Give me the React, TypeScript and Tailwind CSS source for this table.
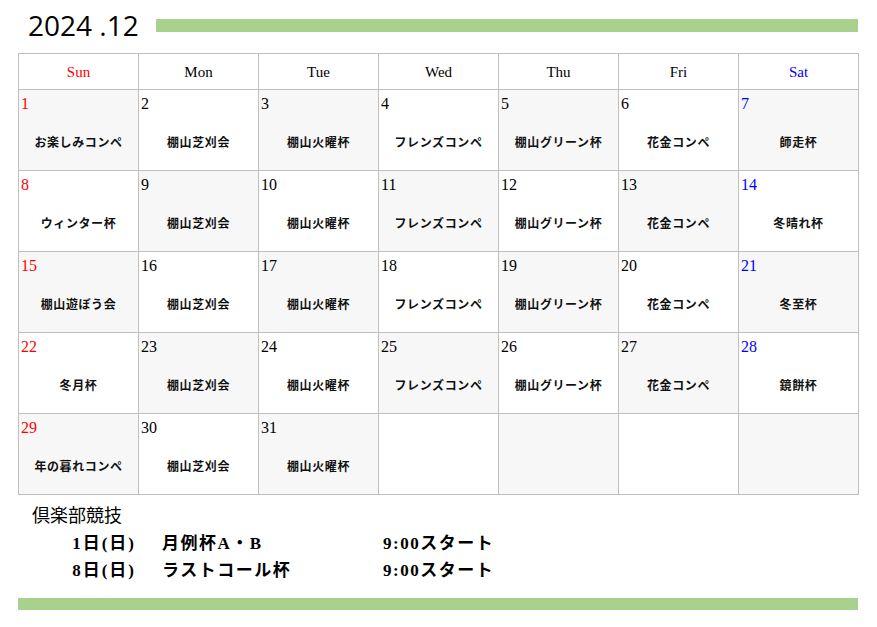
const serif = "font-['Liberation_Serif','Noto_Sans_CJK_JP',serif]";

type Day = { d: number; ev: string } | null;

const days: Day[] = [
  { d: 1, ev: "お楽しみコンペ" },
  { d: 2, ev: "棚山芝刈会" },
  { d: 3, ev: "棚山火曜杯" },
  { d: 4, ev: "フレンズコンペ" },
  { d: 5, ev: "棚山グリーン杯" },
  { d: 6, ev: "花金コンペ" },
  { d: 7, ev: "師走杯" },
  { d: 8, ev: "ウィンター杯" },
  { d: 9, ev: "棚山芝刈会" },
  { d: 10, ev: "棚山火曜杯" },
  { d: 11, ev: "フレンズコンペ" },
  { d: 12, ev: "棚山グリーン杯" },
  { d: 13, ev: "花金コンペ" },
  { d: 14, ev: "冬晴れ杯" },
  { d: 15, ev: "棚山遊ぼう会" },
  { d: 16, ev: "棚山芝刈会" },
  { d: 17, ev: "棚山火曜杯" },
  { d: 18, ev: "フレンズコンペ" },
  { d: 19, ev: "棚山グリーン杯" },
  { d: 20, ev: "花金コンペ" },
  { d: 21, ev: "冬至杯" },
  { d: 22, ev: "冬月杯" },
  { d: 23, ev: "棚山芝刈会" },
  { d: 24, ev: "棚山火曜杯" },
  { d: 25, ev: "フレンズコンペ" },
  { d: 26, ev: "棚山グリーン杯" },
  { d: 27, ev: "花金コンペ" },
  { d: 28, ev: "鏡餅杯" },
  { d: 29, ev: "年の暮れコンペ" },
  { d: 30, ev: "棚山芝刈会" },
  { d: 31, ev: "棚山火曜杯" },
  null,
  null,
  null,
  null,
];

const heads = ["Sun", "Mon", "Tue", "Wed", "Thu", "Fri", "Sat"];

function dayColor(col: number) {
  if (col === 0) return "text-[#ff0000]";
  if (col === 6) return "text-[#0000ff]";
  return "text-black";
}

export default function App() {
  const rows = [0, 1, 2, 3, 4].map((r) => days.slice(r * 7, r * 7 + 7));

  return (
    <div className="h-[627px] w-[877px] bg-white">
      <div className="flex h-[53px] items-center pl-[28px] pr-[19px]">
        <h1 className="-mt-[3px] font-['Open_Sans',sans-serif] text-[28px] leading-none text-black">2024 .12</h1>
        <div className="-mt-[2px] ml-[17px] h-[13px] flex-1 bg-[#a9d18e]" />
      </div>

      <table className={`ml-[18px] w-[841px] table-fixed border-collapse ${serif}`}>
        <thead>
          <tr className="h-[36px]">
            {heads.map((h, i) => (
              <th key={h} className={`w-[120px] border border-[#bfbfbf] bg-white pt-[1px] text-[15px] font-normal ${dayColor(i)}`}>
                {h}
              </th>
            ))}
          </tr>
        </thead>
        <tbody>
          {rows.map((row, r) => (
            <tr key={r} className="h-[81px]">
              {row.map((cell, c) => (
                <td
                  key={c}
                  className={`border border-[#bfbfbf] p-0 align-top ${(r + c) % 2 === 0 ? "bg-[#f7f7f7]" : "bg-white"}`}
                >
                  {cell && (
                    <div className="flex h-[80px] flex-col">
                      <div className={`pl-[2px] pt-[4px] text-[16px] leading-[20px] ${dayColor(c)}`}>{cell.d}</div>
                      <div className="mt-[21px] text-center text-[12px] font-bold leading-[16px] tracking-[0.6px] text-[#111]">
                        {cell.ev}
                      </div>
                    </div>
                  )}
                </td>
              ))}
            </tr>
          ))}
        </tbody>
      </table>

      <div className={`pl-[32px] pt-[9px] text-black ${serif}`}>
        <div className="text-[18px] leading-[24px]">倶楽部競技</div>
        <div className="mt-[2px] flex text-[17px] font-bold leading-[27px]">
          <span className="w-[104px] text-right tracking-[2px]">1日(日)</span>
          <span className="ml-[26px] w-[221px] tracking-[1.5px]">月例杯A・B</span>
          <span className="tracking-[1.5px]">9:00スタート</span>
        </div>
        <div className="flex text-[17px] font-bold leading-[27px]">
          <span className="w-[104px] text-right tracking-[2px]">8日(日)</span>
          <span className="ml-[26px] w-[221px] tracking-[1.5px]">ラストコール杯</span>
          <span className="tracking-[1.5px]">9:00スタート</span>
        </div>
      </div>

      <div className="ml-[18px] mt-[14px] h-[12px] w-[840px] bg-[#a9d18e]" />
    </div>
  );
}
